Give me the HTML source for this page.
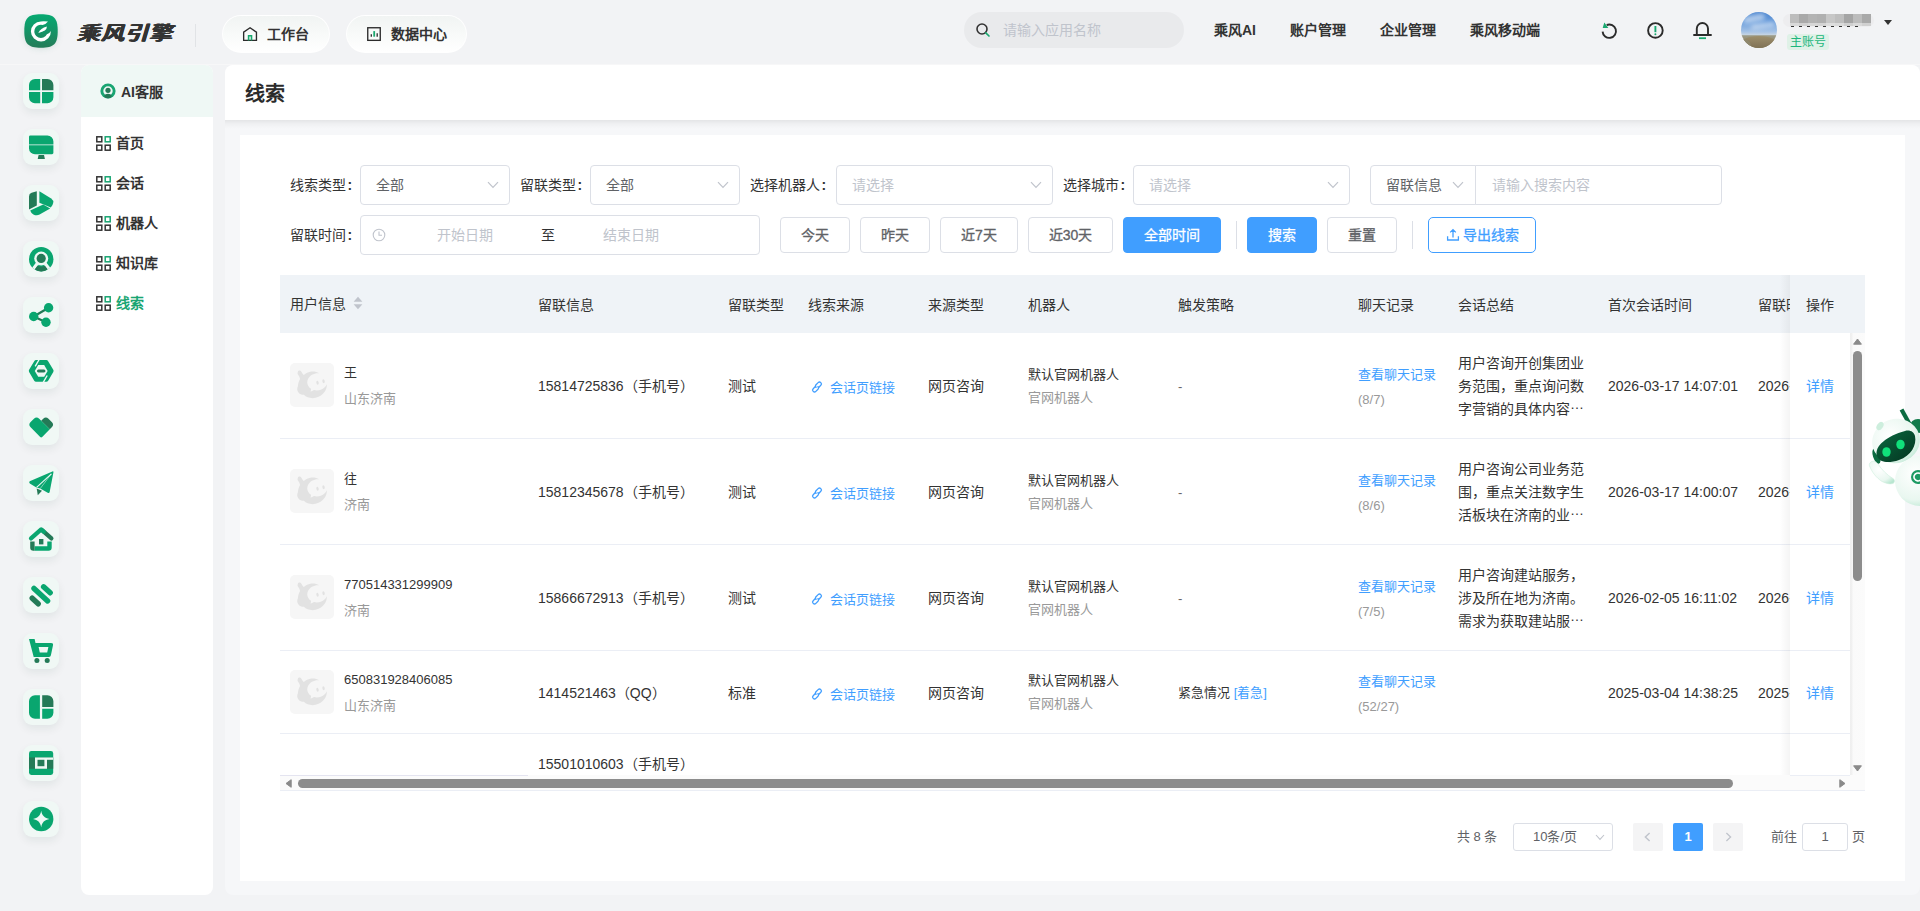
<!DOCTYPE html>
<html lang="zh-CN">
<head>
<meta charset="utf-8">
<title>线索</title>
<style>
*{box-sizing:border-box;margin:0;padding:0}
html,body{width:1920px;height:911px;overflow:hidden}
body{position:relative;background:#f2f3f5;font-family:"Liberation Sans",sans-serif;font-size:14px;color:#333;-webkit-font-smoothing:auto}
.a{position:absolute}
.t{position:absolute;white-space:nowrap;line-height:20px;height:20px}
.b{font-weight:700}
.m{font-weight:500}
svg{display:block;position:absolute;overflow:visible}
/* header */
.pill{position:absolute;top:15px;height:38px;border-radius:19px;background:linear-gradient(180deg,#f1f4f3 0%,#f8faf9 50%,#ffffff 100%);border:1px solid rgba(255,255,255,.95)}
.nav{position:absolute;top:20px;line-height:20px;font-weight:700;font-size:14px;color:#333;white-space:nowrap}
/* side icons */
.ib{position:absolute;left:23px;width:36px;height:36px;border-radius:9px;background:#f0f8f5;box-shadow:0 4px 8px rgba(20,60,45,.07)}
.ib svg{left:6px;top:6px;width:24px;height:24px}
/* submenu */
.mi{position:absolute;left:116px;font-weight:700;font-size:14px;line-height:20px;color:#333;white-space:nowrap}
.gi{left:96px;width:15px;height:15px}
/* form */
.lbl{position:absolute;font-size:14px;line-height:20px;color:#333;white-space:nowrap}
.sel{position:absolute;height:40px;border:1px solid #dcdfe6;border-radius:4px;background:#fff}
.sel .v{position:absolute;left:15px;top:9px;line-height:20px;font-size:14px;color:#606266;white-space:nowrap}
.sel .ph{color:#c0c4cc}
.sel svg.ch{right:10px;top:15px;width:12px;height:8px}
.btn{position:absolute;top:217px;height:36px;border:1px solid #dcdfe6;border-radius:4px;background:#fff;color:#606266;font-size:14px;font-weight:400;-webkit-text-stroke:.3px;line-height:34px;text-align:center;white-space:nowrap}
.btn.p{background:#409eff;border-color:#409eff;color:#fff}
/* table */
.th{position:absolute;top:19px;line-height:20px;font-size:14px;color:#333;white-space:nowrap}
.row{position:absolute;left:0;width:1570px;border-bottom:1px solid #ebeef5}
.c14{font-size:14px;color:#333}
.c13{font-size:13px;color:#333}
.g13{font-size:13px;color:#999}
.l13{font-size:13px;color:#409eff}
.av{position:absolute;left:10px;width:44px;height:44px;border-radius:5px;background:#f6f6f6}
.av svg{left:0;top:0;width:44px;height:44px}
.sum{position:absolute;left:1178px;width:130px;font-size:14px;line-height:23px;color:#333}
/* pagination */
.pg{position:absolute;top:823px;height:28px;border-radius:2px}
</style>
</head>
<body>

<!-- header -->
<div class="a" style="left:0;top:64px;width:1920px;height:1px;background:#f7f7f8"></div>
<div class="a" style="left:27px;top:20px;width:28px;height:26px;border-radius:11px;background:rgba(30,110,80,.55);filter:blur(4px);opacity:.55"></div>
<svg viewBox="0 0 34 34" style="left:24px;top:14px;width:34px;height:34px"><defs><linearGradient id="lg0" x1="0" y1="0" x2="0" y2="1"><stop offset="0" stop-color="#06a971"/><stop offset=".5" stop-color="#149466"/><stop offset="1" stop-color="#257c59"/></linearGradient></defs>
<path d="M17 .3C30 .3 33.700 4 33.700 17C33.700 30 30 33.700 17 33.700C4 33.700 .3 30 .3 17C.3 4 4 .3 17 .3z" fill="url(#lg0)"/>
<path d="M24 7.500Q20 7.200 16.900 7.400A10 10 0 1 0 26.900 17Q25.600 19.400 22.900 20.200A6.600 6.600 0 1 1 18.600 11Q21.800 10.400 24 7.500z" fill="#fff"/>
<path d="M14.300 19Q16.400 14.200 22.900 12.500Q23 17 14.300 19z" fill="#fff"/>
</svg>
<div class="a b" style="left:78.500px;top:17.500px;width:110px;height:30px;line-height:30px;font-size:19.500px;font-weight:400;color:#333;white-space:nowrap;transform-origin:0 50%;transform:scaleX(1.17) skewX(-14deg);letter-spacing:.55px;text-shadow:.4px 0 0 #333,-.4px 0 0 #333,.8px 0 0 #333,-.8px 0 0 #333,1.150px 0 0 #333,-1.150px 0 0 #333">乘风引擎</div>
<div class="a" style="left:195px;top:24px;width:1px;height:23px;background:#e1e3e6"></div>

<div class="pill" style="left:222px;width:108px"></div>
<svg viewBox="242 26 16 16" style="left:242px;top:26px;width:16px;height:16px"><path d="M243.650 40.400V32.200L250.050 27.800L256.450 32.200V40.400z" fill="none" stroke="#2b2b2b" stroke-width="1.350" stroke-linejoin="miter"/><path d="M248.600 40.400V35.700h2.900V40.400" fill="none" stroke="#19a86f" stroke-width="1.600"/></svg>
<div class="nav" style="left:267px;top:24px">工作台</div>

<div class="pill" style="left:346px;width:121px"></div>
<svg viewBox="366 26 16 16" style="left:366px;top:26px;width:16px;height:16px"><rect x="367.750" y="27.750" width="12.500" height="12.600" fill="none" stroke="#2b2b2b" stroke-width="1.350"/><path d="M371.300 34.200V36.700M377.200 33.300V36.700" stroke="#2b2b2b" stroke-width="1.300" fill="none"/><path d="M374.200 31.100V36.700" stroke="#19a86f" stroke-width="1.800" fill="none"/></svg>
<div class="nav" style="left:391px;top:24px">数据中心</div>

<div class="a" style="left:964px;top:12px;width:220px;height:36px;border-radius:18px;background:#e9eaec"></div>
<svg viewBox="0 0 16 16" style="left:975px;top:22px;width:16px;height:16px"><circle cx="7" cy="7" r="5" fill="none" stroke="#333" stroke-width="1.6"/><path d="M10.8 10.8L14 14" stroke="#19a86f" stroke-width="1.7" stroke-linecap="round"/></svg>
<div class="t" style="left:1003px;top:20px;color:#c0c4cc;font-size:14px">请输入应用名称</div>

<div class="nav" style="left:1214px">乘风AI</div>
<div class="nav" style="left:1290px">账户管理</div>
<div class="nav" style="left:1380px">企业管理</div>
<div class="nav" style="left:1470px">乘风移动端</div>

<svg viewBox="1590 10 140 40" style="left:1590px;top:10px;width:140px;height:40px">
<path d="M1606.700 25A6.700 6.700 0 1 1 1602.600 31.600" fill="none" stroke="#2b2b2b" stroke-width="1.900"/>
<path d="M1604.300 22.600L1602.700 28H1608.400z" fill="#19a86f"/>
<circle cx="1655.400" cy="30.400" r="7.300" fill="none" stroke="#2b2b2b" stroke-width="1.900"/>
<path d="M1655.400 26V32.200" stroke="#19a86f" stroke-width="1.900"/><circle cx="1655.400" cy="34.200" r="1" fill="#19a86f"/>
<path d="M1694 35H1711M1696.800 35V28.500a5.600 5.600 0 0 1 11.200 0V35" fill="none" stroke="#2b2b2b" stroke-width="1.900" stroke-linecap="round"/>
<path d="M1699 38.200H1706" stroke="#19a86f" stroke-width="1.800"/>
</svg>

<div class="a" style="left:1741px;top:12px;width:36px;height:36px;border-radius:50%;overflow:hidden;background:linear-gradient(180deg,#4a84cf 0%,#6d9fdc 30%,#a6c3e6 55%,#c4d3e2 63%,#9c9a86 66%,#8a7a58 100%)">
<div class="a" style="left:2px;top:3px;width:22px;height:7px;border-radius:4px;background:rgba(255,255,255,.5);filter:blur(2px);transform:rotate(-12deg)"></div>
<div class="a" style="left:10px;top:11px;width:24px;height:5px;border-radius:3px;background:rgba(255,255,255,.45);filter:blur(2px);transform:rotate(-8deg)"></div>
<div class="a" style="left:-2px;top:24px;width:40px;height:24px;border-radius:50% 50% 0 0 / 40% 40% 0 0;background:linear-gradient(180deg,#9d8f6c 0%,#86775a 40%,#5f5b3c 100%)"></div>
<div class="a" style="left:-6px;top:27px;width:16px;height:14px;border-radius:50%;background:#8f8a70;opacity:.8"></div>
</div>
<div class="a" style="left:1783px;top:14px;width:91px;height:13px;border-radius:7px;background:#ededef"></div>
<div class="a" style="left:1790px;top:14px;width:9px;height:9px;background:#bdbdbd"></div><div class="a" style="left:1799px;top:14px;width:9px;height:9px;background:#a9a9a9"></div><div class="a" style="left:1808px;top:14px;width:9px;height:9px;background:#b3b3b3"></div><div class="a" style="left:1817px;top:14px;width:9px;height:9px;background:#b0b0b0"></div><div class="a" style="left:1826px;top:14px;width:9px;height:9px;background:#c7c7c7"></div><div class="a" style="left:1835px;top:14px;width:9px;height:9px;background:#bebebe"></div><div class="a" style="left:1844px;top:14px;width:9px;height:9px;background:#a5a5a5"></div><div class="a" style="left:1853px;top:14px;width:9px;height:9px;background:#bcbcbc"></div><div class="a" style="left:1862px;top:14px;width:9px;height:9px;background:#a9a9a9"></div>
<div class="a" style="left:1790px;top:23px;width:9px;height:3px;background:#d9d9d9"></div><div class="a" style="left:1799px;top:23px;width:9px;height:3px;background:#d0d0d0"></div><div class="a" style="left:1808px;top:23px;width:9px;height:3px;background:#d6d6d6"></div><div class="a" style="left:1817px;top:23px;width:9px;height:3px;background:#d4d4d4"></div><div class="a" style="left:1826px;top:23px;width:9px;height:3px;background:#dedede"></div><div class="a" style="left:1835px;top:23px;width:9px;height:3px;background:#dadada"></div><div class="a" style="left:1844px;top:23px;width:9px;height:3px;background:#cfcfcf"></div><div class="a" style="left:1853px;top:23px;width:9px;height:3px;background:#d9d9d9"></div><div class="a" style="left:1862px;top:23px;width:9px;height:3px;background:#d0d0d0"></div>
<div class="a" style="left:1791px;top:26px;width:72px;height:1px;background:repeating-linear-gradient(90deg,#333 0,#333 3px,transparent 3px,transparent 8px)"></div>
<div class="a" style="left:1787px;top:34px;width:42px;height:16px;border-radius:3px;background:#dff1e7"></div>
<div class="t" style="left:1790px;top:32px;font-size:12px;color:#1db67b">主账号</div>
<svg viewBox="0 0 8 5" style="left:1884px;top:20px;width:8px;height:5px"><path d="M0 0h8L4 5z" fill="#333"/></svg>

<!-- left icon bar -->
<div class="ib" style="top:73px"><svg viewBox="0 0 24 24"><path d="M0 6a6 6 0 0 1 6-6h5.200v11.200H0z" fill="#09a66f"/><path d="M13 0h5.400a6 6 0 0 1 6 6v5.200H13z" fill="#247a57"/><path d="M0 13h11.200v11.200H6a6 6 0 0 1-6-6z" fill="#09a66f"/><path d="M13 13h11.400v5.200a6 6 0 0 1-6 6H13z" fill="#09a66f"/></svg></div>
<div class="ib" style="top:129px"><svg viewBox="0 0 24 24"><g transform="translate(0 -.6)"><path d="M0 2.400A1.400 1.400 0 0 1 1.400 1H18.400a6 6 0 0 1 6 6v3.100H0z" fill="#09a66f"/><path d="M0 10.800h24.400v7.600a1.400 1.400 0 0 1-1.400 1.400H6a6 6 0 0 1-6-6z" fill="#09a66f"/><path d="M9.600 20.600h5.400l.9 4.100H8.700z" fill="#247a57"/></g></svg></div>
<div class="ib" style="top:185px"><svg viewBox="0 0 24 24"><path d="M0 5.400Q0 2.600 2.600 1.800L7.800.2V14.400L0 18.600z" fill="#247a57"/><path d="M10.400.3L22.200 7.400Q24.800 9.200 24.200 12Q23.600 14.800 21.800 16.400L10.400 11.800z" fill="#09a66f"/><path d="M1.200 19.600L14.200 13.600 21.200 17.400 10.600 23.600Q7.600 25 4.400 23.400Q2 22.200 1.200 19.600z" fill="#09a66f"/></svg></div>
<div class="ib" style="top:241px"><svg viewBox="0 0 24 24"><circle cx="12.200" cy="12.200" r="12.200" fill="#09a66f"/><circle cx="12.200" cy="11.600" r="7" fill="#eef8f4"/><path d="M8.400 16.600L4.600 21.600M16 16.600l3.800 5" stroke="#eef8f4" stroke-width="3.400"/><circle cx="12.200" cy="11.400" r="4.600" fill="#247a57"/><path d="M5.800 22.200L8.600 18.600Q12.200 21 15.800 18.600L18.600 22.200Q15.600 24.400 12.200 24.400T5.800 22.200z" fill="#247a57"/></svg></div>
<div class="ib" style="top:297px"><svg viewBox="0 0 24 24"><path d="M4.700 13.500L19.600 4.700M4.700 13.500L17 19.300" stroke="#247a57" stroke-width="2.200" fill="none"/><circle cx="4.700" cy="13.500" r="4.700" fill="#09a66f"/><circle cx="19.600" cy="4.700" r="4.700" fill="#09a66f"/><circle cx="17" cy="19.300" r="4.700" fill="#09a66f"/></svg></div>
<div class="ib" style="top:353px"><svg viewBox="0 0 24 24"><g transform="translate(12.200 11.900) scale(1.070) translate(-12.200 -11.900)"><path d="M7.400 1.800h9.600a2 2 0 0 1 1.700 1l4.800 8.100a2 2 0 0 1 0 2l-4.800 8.100a2 2 0 0 1-1.700 1H7.400a2 2 0 0 1-1.700-1L.9 12.900a2 2 0 0 1 0-2l4.800-8.100a2 2 0 0 1 1.700-1z" fill="#09a66f"/><path d="M9.400 6.400h5.600l3.200 5.500-3.200 5.500H9.400L6.200 11.900z" fill="#eef8f4"/><path d="M10.400 1L6.600 7.600M14 22.800l3.800-6.600" stroke="#eef8f4" stroke-width="1.300"/><rect x="8.200" y="10.500" width="8" height="3" rx="1.400" fill="#247a57"/></g></svg></div>
<div class="ib" style="top:409px"><svg viewBox="0 0 24 24"><g transform="translate(12.200 12) scale(1.100) translate(-12.200 -12.100)"><path d="M12.200 6.440L14.020 4.620Q16.420 2.220 18.820 4.620L21.800 7.600Q24.200 10 21.800 12.400L19.980 14.220z" fill="#247a57"/><path d="M2.600 12.400Q.2 10 2.600 7.600L5.580 4.620Q7.980 2.220 10.380 4.620L19.980 14.220 13.100 21.100Q12.200 22 11.300 21.100z" fill="#09a66f"/></g></svg></div>
<div class="ib" style="top:465px"><svg viewBox="0 0 24 24"><path d="M7.700 17.400L8.800 24.200 13 19.800z" fill="#247a57"/><path d="M.7 10.200L23.400 .5Q24.700 0 24.400 1.400L20.700 20.800Q20.300 22.600 18.700 21.700L11.200 17.600 7.400 16.400 .8 12.500Q-.4 11.300 .7 10.200z" fill="#09a66f"/><path d="M7.600 16.400L22.400 2.800" stroke="#eef8f4" stroke-width="1.100" fill="none"/><path d="M11.200 17.600L22.400 2.800" stroke="#eef8f4" stroke-width=".5" fill="none"/></svg></div>
<div class="ib" style="top:521px"><svg viewBox="0 0 24 24"><path d="M5.600 14.600V19.200h12.700v-4.600h4.400V20.400a3.300 3.300 0 0 1-3.300 3.300H5.600z" fill="#09a66f"/><path d="M1.200 14.600h4.400v9.100H4.500A3.300 3.300 0 0 1 1.200 20.400z" fill="#247a57"/><rect x="10" y="12" width="4.400" height="5.400" fill="#247a57"/><path d="M13.600 3.600L22.400 11.400" stroke="#247a57" stroke-width="4.200" stroke-linecap="round" fill="none"/><path d="M2 11.400L12.200 2.400 14.800 4.700" stroke="#09a66f" stroke-width="4.200" stroke-linecap="round" stroke-linejoin="round" fill="none"/></svg></div>
<div class="ib" style="top:577px"><svg viewBox="0 0 24 24"><path d="M14.600 3.800l6.600 6M5 5.400L18.600 18" stroke="#09a66f" stroke-width="5.400" stroke-linecap="round"/><path d="M3.200 15.200l6 5.600" stroke="#247a57" stroke-width="5.400" stroke-linecap="round"/></svg></div>
<div class="ib" style="top:633px"><svg viewBox="0 0 24 24"><path d="M0 0h5.600l.9 3.900H22a2 2 0 0 1 2 2.400l-2.100 10a2 2 0 0 1-2 1.600H4.700zM9.600 8l1.200 5.400h7.400L19.400 8z" fill="#09a66f" fill-rule="evenodd"/><circle cx="7.900" cy="21.400" r="2.500" fill="#247a57"/><circle cx="18.200" cy="21.400" r="2.500" fill="#247a57"/></svg></div>
<div class="ib" style="top:689px"><svg viewBox="0 0 24 24"><path d="M6 .2h4.900v23.600H6a6 6 0 0 1-6-6V6.200a6 6 0 0 1 6-6z" fill="#09a66f"/><path d="M13.200.2H18.400a6 6 0 0 1 6 6V12H13.200z" fill="#247a57"/><path d="M13.200 13.700H24.400v4.100a6 6 0 0 1-6 6H13.200z" fill="#09a66f"/></svg></div>
<div class="ib" style="top:745px"><svg viewBox="0 0 24 24"><rect x="0" y="0" width="24.200" height="24" rx="2.400" fill="#09a66f"/><rect x="0" y="6.450" width="24.200" height="11.300" fill="#247a57"/><rect x="6" y="6.450" width="12" height="11.300" fill="#eef8f4"/><rect x="18" y="6.450" width="6.200" height="2.350" fill="#eef8f4"/><rect x="8.500" y="8.800" width="6.900" height="6.400" fill="#247a57"/></svg></div>
<div class="ib" style="top:801px"><svg viewBox="0 0 24 24"><circle cx="12.200" cy="12" r="12.200" fill="#09a66f"/><path d="M12.200 3.800C13 8.600 15.600 11.200 20.400 12 15.600 12.800 13 15.400 12.200 20.200 11.400 15.400 8.800 12.800 4 12 8.800 11.200 11.400 8.600 12.200 3.800z" fill="#eef8f4"/></svg></div>

<!-- submenu -->
<div class="a" style="left:81px;top:65px;width:132px;height:830px;border-radius:8px;background:#fff"></div>
<div class="a" style="left:81px;top:65px;width:132px;height:52px;border-radius:8px 8px 0 0;background:#eff8f5"></div>
<svg viewBox="0 0 16 16" style="left:100.200px;top:83.200px;width:16px;height:16px"><circle cx="8" cy="8" r="7.600" fill="#19a572"/><circle cx="8" cy="8" r="4.700" fill="#eff8f5"/><circle cx="8" cy="7.300" r="2.600" fill="#247a57"/><path d="M4 13.200C4.800 11.400 6.200 10.700 8 10.700s3.200.7 4 2.500c-1.100 1.400-2.500 2.100-4 2.100s-2.900-.7-4-2.100z" fill="#247a57"/></svg>
<div class="mi" style="left:121px;top:82px">AI客服</div>
<svg class="gi" viewBox="0 0 15 15" style="top:136px"><rect x=".8" y=".8" width="5" height="5" fill="none" stroke="#333" stroke-width="1.500"/><rect x="9.200" y=".8" width="5" height="5" fill="none" stroke="#19a572" stroke-width="1.500"/><rect x=".8" y="9.200" width="5" height="5" fill="none" stroke="#333" stroke-width="1.500"/><rect x="9.200" y="9.200" width="5" height="5" fill="none" stroke="#333" stroke-width="1.500"/></svg><div class="mi" style="top:133px;color:#333">首页</div>
<svg class="gi" viewBox="0 0 15 15" style="top:176px"><rect x=".8" y=".8" width="5" height="5" fill="none" stroke="#333" stroke-width="1.500"/><rect x="9.200" y=".8" width="5" height="5" fill="none" stroke="#19a572" stroke-width="1.500"/><rect x=".8" y="9.200" width="5" height="5" fill="none" stroke="#333" stroke-width="1.500"/><rect x="9.200" y="9.200" width="5" height="5" fill="none" stroke="#333" stroke-width="1.500"/></svg><div class="mi" style="top:173px;color:#333">会话</div>
<svg class="gi" viewBox="0 0 15 15" style="top:216px"><rect x=".8" y=".8" width="5" height="5" fill="none" stroke="#333" stroke-width="1.500"/><rect x="9.200" y=".8" width="5" height="5" fill="none" stroke="#19a572" stroke-width="1.500"/><rect x=".8" y="9.200" width="5" height="5" fill="none" stroke="#333" stroke-width="1.500"/><rect x="9.200" y="9.200" width="5" height="5" fill="none" stroke="#333" stroke-width="1.500"/></svg><div class="mi" style="top:213px;color:#333">机器人</div>
<svg class="gi" viewBox="0 0 15 15" style="top:256px"><rect x=".8" y=".8" width="5" height="5" fill="none" stroke="#333" stroke-width="1.500"/><rect x="9.200" y=".8" width="5" height="5" fill="none" stroke="#19a572" stroke-width="1.500"/><rect x=".8" y="9.200" width="5" height="5" fill="none" stroke="#333" stroke-width="1.500"/><rect x="9.200" y="9.200" width="5" height="5" fill="none" stroke="#333" stroke-width="1.500"/></svg><div class="mi" style="top:253px;color:#333">知识库</div>
<svg class="gi" viewBox="0 0 15 15" style="top:296px"><rect x=".8" y=".8" width="5" height="5" fill="none" stroke="#333" stroke-width="1.500"/><rect x="9.200" y=".8" width="5" height="5" fill="none" stroke="#19a572" stroke-width="1.500"/><rect x=".8" y="9.200" width="5" height="5" fill="none" stroke="#333" stroke-width="1.500"/><rect x="9.200" y="9.200" width="5" height="5" fill="none" stroke="#333" stroke-width="1.500"/></svg><div class="mi" style="top:293px;color:#19a572">线索</div>

<!-- main -->
<div class="a" style="left:225px;top:65px;width:1695px;height:830px;border-radius:8px;background:#f6f7f9;overflow:hidden">
<div class="a" style="left:0;top:55px;width:1695px;height:9px;background:linear-gradient(180deg,rgba(0,0,0,.075) 0%,rgba(0,0,0,.032) 40%,rgba(0,0,0,.008) 80%,rgba(0,0,0,0) 100%)"></div>
<div class="a" style="left:0;top:0;width:1695px;height:55px;background:#fff"></div>
</div>
<div class="a b" style="left:245px;top:80px;font-size:20px;line-height:28px;color:#2b2b2b;white-space:nowrap">线索</div>
<div class="a" style="left:240px;top:135px;width:1665px;height:746px;background:#fff"></div>

<!-- filters row 1 -->
<div class="lbl" style="left:290px;top:175px">线索类型<span style="font-weight:700;margin-left:1.500px">:</span></div>
<div class="sel" style="left:360px;top:165px;width:150px"><span class="v">全部</span><svg class="ch" viewBox="0 0 12 8"><path d="M1 1.200L6 6.400 11 1.200" fill="none" stroke="#c0c4cc" stroke-width="1.200"/></svg></div>
<div class="lbl" style="left:520px;top:175px">留联类型<span style="font-weight:700;margin-left:1.500px">:</span></div>
<div class="sel" style="left:590px;top:165px;width:150px"><span class="v">全部</span><svg class="ch" viewBox="0 0 12 8"><path d="M1 1.200L6 6.400 11 1.200" fill="none" stroke="#c0c4cc" stroke-width="1.200"/></svg></div>
<div class="lbl" style="left:750px;top:175px">选择机器人<span style="font-weight:700;margin-left:1.500px">:</span></div>
<div class="sel" style="left:836px;top:165px;width:217px"><span class="v ph">请选择</span><svg class="ch" viewBox="0 0 12 8"><path d="M1 1.200L6 6.400 11 1.200" fill="none" stroke="#c0c4cc" stroke-width="1.200"/></svg></div>
<div class="lbl" style="left:1063px;top:175px">选择城市<span style="font-weight:700;margin-left:1.500px">:</span></div>
<div class="sel" style="left:1133px;top:165px;width:217px"><span class="v ph">请选择</span><svg class="ch" viewBox="0 0 12 8"><path d="M1 1.200L6 6.400 11 1.200" fill="none" stroke="#c0c4cc" stroke-width="1.200"/></svg></div>
<div class="sel" style="left:1370px;top:165px;width:106px;border-radius:4px 0 0 4px"><span class="v" style="left:15px">留联信息</span><svg class="ch" viewBox="0 0 12 8" style="right:11px"><path d="M1 1.200L6 6.400 11 1.200" fill="none" stroke="#c0c4cc" stroke-width="1.200"/></svg></div>
<div class="sel" style="left:1475px;top:165px;width:247px;border-radius:0 4px 4px 0"><span class="v ph" style="left:16px">请输入搜索内容</span></div>

<!-- filters row 2 -->
<div class="lbl" style="left:290px;top:225px">留联时间<span style="font-weight:700;margin-left:1.500px">:</span></div>
<div class="sel" style="left:360px;top:215px;width:400px"></div>
<svg viewBox="0 0 14 14" style="left:372px;top:228px;width:14px;height:14px"><circle cx="7" cy="7" r="5.800" fill="none" stroke="#c0c4cc" stroke-width="1.100"/><path d="M7 3.600V7.200H10" fill="none" stroke="#c0c4cc" stroke-width="1.100"/></svg>
<div class="t" style="left:437px;top:225px;color:#c0c4cc">开始日期</div>
<div class="t" style="left:541px;top:225px;color:#303133">至</div>
<div class="t" style="left:603px;top:225px;color:#c0c4cc">结束日期</div>

<div class="btn" style="left:780px;width:70px">今天</div>
<div class="btn" style="left:860px;width:70px">昨天</div>
<div class="btn" style="left:940px;width:78px">近7天</div>
<div class="btn" style="left:1028px;width:85px">近30天</div>
<div class="btn p" style="left:1123px;width:98px">全部时间</div>
<div class="a" style="left:1236px;top:221px;width:1px;height:28px;background:#dcdfe6"></div>
<div class="btn p" style="left:1247px;width:70px">搜索</div>
<div class="btn" style="left:1327px;width:70px">重置</div>
<div class="a" style="left:1412px;top:221px;width:1px;height:28px;background:#dcdfe6"></div>
<div class="btn" style="left:1428px;width:108px;border-color:#409eff;color:#409eff;border-radius:5px;text-align:left;padding-left:34px">导出线索</div>
<svg viewBox="0 0 14 14" style="left:1446px;top:228px;width:14px;height:14px"><path d="M7 9.400V1.800M4.200 4.400L7 1.600l2.800 2.800M1.600 8.200v3.800h10.800V8.200" fill="none" stroke="#409eff" stroke-width="1.300"/></svg>

<!-- table -->
<div class="a" style="left:280px;top:275px;width:1585px;height:58px;background:#eff3f7"></div>
<div class="t c14" style="left:290px;top:293.5px">用户信息</div><div class="t c14" style="left:538px;top:294.5px">留联信息</div><div class="t c14" style="left:728px;top:294.5px">留联类型</div><div class="t c14" style="left:808px;top:294.5px">线索来源</div><div class="t c14" style="left:928px;top:294.5px">来源类型</div><div class="t c14" style="left:1028px;top:294.5px">机器人</div><div class="t c14" style="left:1178px;top:294.5px">触发策略</div><div class="t c14" style="left:1358px;top:294.5px">聊天记录</div><div class="t c14" style="left:1458px;top:294.5px">会话总结</div><div class="t c14" style="left:1608px;top:294.5px">首次会话时间</div><div class="t c14" style="left:1758px;top:294.5px">留联时间</div>
<svg viewBox="0 0 10 14" style="left:353px;top:296px;width:10px;height:14px"><path d="M5 .8L9.400 5.800H.6z" fill="#c0c4cc"/><path d="M5 13.200L9.400 8.200H.6z" fill="#c0c4cc"/></svg>
<div class="a" style="left:280px;top:438px;width:1570px;height:1px;background:#ebeef5"></div>
<div class="av" style="left:290px;top:363.0px"><svg viewBox="0 0 44 44"><g transform="translate(22 22.800) scale(1.060) translate(-22 -22)"><path d="M8.600 9.200a1.700 1.700 0 0 1 3.200-.8c.9 1.200 1.300 2.600 2.500 3.400 1.700-1.700 4.300-2.900 7.300-3.200 2.700-.2 5.200.4 7 1.600-2.200-.3-4.600.2-6.600 1.400-3.400 2-5.100 5.600-4.200 8.900.5 1.800 1.700 3.300 3.300 4.300l-.4 2.900 3.200-1.700c2 .6 4.300.5 6.500-.3 2.600-1 4.600-2.900 5.600-5.200.3 4.700-2.600 9.600-7.800 11.900-5 2.200-10.600 1.400-13.900-1.900-1.700.2-3.600-.5-4.900-1.900-1.500-1.700-1.700-4-.8-5.900.3-2.800.9-5 2.100-7.100-.3-1.900-1.300-3.100-2.100-4.400-.3-.6-.3-1.300 0-2z" fill="#e2e2e2"/><ellipse cx="27.200" cy="19.200" rx="1.100" ry="1.900" transform="rotate(-12 27.200 19.200)" fill="#e2e2e2"/><ellipse cx="32.900" cy="17.600" rx="1.100" ry="1.900" transform="rotate(-12 32.900 17.600)" fill="#e2e2e2"/></g></svg></div>
<div class="t c13" style="left:344px;top:363.0px">王</div>
<div class="t g13" style="left:344px;top:389.2px">山东济南</div>
<div class="t c14" style="left:538px;top:376.0px">15814725836（手机号）</div>
<div class="t c14" style="left:728px;top:376.0px">测试</div>
<svg viewBox="-7 -7 14 14" style="left:810.1px;top:380.2px;width:14px;height:14px"><g fill="none" stroke="#409eff" stroke-width="1.300" stroke-linecap="round" transform="rotate(-45)"><path d="M-.5 -1.500H-3.900a1.900 1.900 0 0 0 0 3.800h3a1.900 1.900 0 0 0 1.900-1.900"/><path d="M.5 1.500H3.900a1.900 1.900 0 0 0 0-3.800h-3a1.900 1.900 0 0 0-1.900 1.900"/></g></svg>
<div class="t l13" style="left:830px;top:378.0px">会话页链接</div>
<div class="t c14" style="left:928px;top:376.0px">网页咨询</div>
<div class="t c13" style="left:1028px;top:364.5px">默认官网机器人</div>
<div class="t g13" style="left:1028px;top:387.5px">官网机器人</div>
<div class="t" style="left:1178px;top:376.5px;font-size:13px;color:#666">-</div>
<div class="t l13" style="left:1358px;top:365.0px">查看聊天记录</div>
<div class="t g13" style="left:1358px;top:390.0px">(8/7)</div>
<div class="sum" style="left:1458px;top:351.8px">用户咨询开创集团业<br>务范围，重点询问数<br>字营销的具体内容<span style="position:relative;top:-4.500px">…</span></div>
<div class="t c14" style="left:1608px;top:376.0px">2026-03-17 14:07:01</div>
<div class="t c14" style="left:1758px;top:376.0px">2026-03-17</div>
<div class="a" style="left:280px;top:544px;width:1570px;height:1px;background:#ebeef5"></div>
<div class="av" style="left:290px;top:469.0px"><svg viewBox="0 0 44 44"><g transform="translate(22 22.800) scale(1.060) translate(-22 -22)"><path d="M8.600 9.200a1.700 1.700 0 0 1 3.200-.8c.9 1.200 1.300 2.600 2.500 3.400 1.700-1.700 4.300-2.900 7.300-3.200 2.700-.2 5.200.4 7 1.600-2.200-.3-4.600.2-6.600 1.400-3.400 2-5.100 5.600-4.200 8.900.5 1.800 1.700 3.300 3.300 4.300l-.4 2.900 3.200-1.700c2 .6 4.300.5 6.500-.3 2.600-1 4.600-2.900 5.600-5.200.3 4.700-2.600 9.600-7.800 11.900-5 2.200-10.600 1.400-13.900-1.900-1.700.2-3.600-.5-4.900-1.900-1.500-1.700-1.700-4-.8-5.900.3-2.800.9-5 2.100-7.100-.3-1.900-1.300-3.100-2.100-4.400-.3-.6-.3-1.300 0-2z" fill="#e2e2e2"/><ellipse cx="27.200" cy="19.200" rx="1.100" ry="1.900" transform="rotate(-12 27.200 19.200)" fill="#e2e2e2"/><ellipse cx="32.900" cy="17.600" rx="1.100" ry="1.900" transform="rotate(-12 32.900 17.600)" fill="#e2e2e2"/></g></svg></div>
<div class="t c13" style="left:344px;top:469.0px">往</div>
<div class="t g13" style="left:344px;top:495.2px">济南</div>
<div class="t c14" style="left:538px;top:482.0px">15812345678（手机号）</div>
<div class="t c14" style="left:728px;top:482.0px">测试</div>
<svg viewBox="-7 -7 14 14" style="left:810.1px;top:486.2px;width:14px;height:14px"><g fill="none" stroke="#409eff" stroke-width="1.300" stroke-linecap="round" transform="rotate(-45)"><path d="M-.5 -1.500H-3.900a1.900 1.900 0 0 0 0 3.800h3a1.900 1.900 0 0 0 1.900-1.900"/><path d="M.5 1.500H3.900a1.900 1.900 0 0 0 0-3.800h-3a1.900 1.900 0 0 0-1.900 1.900"/></g></svg>
<div class="t l13" style="left:830px;top:484.0px">会话页链接</div>
<div class="t c14" style="left:928px;top:482.0px">网页咨询</div>
<div class="t c13" style="left:1028px;top:470.5px">默认官网机器人</div>
<div class="t g13" style="left:1028px;top:493.5px">官网机器人</div>
<div class="t" style="left:1178px;top:482.5px;font-size:13px;color:#666">-</div>
<div class="t l13" style="left:1358px;top:471.0px">查看聊天记录</div>
<div class="t g13" style="left:1358px;top:496.0px">(8/6)</div>
<div class="sum" style="left:1458px;top:457.8px">用户咨询公司业务范<br>围，重点关注数字生<br>活板块在济南的业<span style="position:relative;top:-4.500px">…</span></div>
<div class="t c14" style="left:1608px;top:482.0px">2026-03-17 14:00:07</div>
<div class="t c14" style="left:1758px;top:482.0px">2026-03-17</div>
<div class="a" style="left:280px;top:650px;width:1570px;height:1px;background:#ebeef5"></div>
<div class="av" style="left:290px;top:575.0px"><svg viewBox="0 0 44 44"><g transform="translate(22 22.800) scale(1.060) translate(-22 -22)"><path d="M8.600 9.200a1.700 1.700 0 0 1 3.200-.8c.9 1.200 1.300 2.600 2.500 3.400 1.700-1.700 4.300-2.900 7.300-3.200 2.700-.2 5.200.4 7 1.600-2.200-.3-4.600.2-6.600 1.400-3.400 2-5.100 5.600-4.200 8.900.5 1.800 1.700 3.300 3.300 4.300l-.4 2.900 3.200-1.700c2 .6 4.300.5 6.500-.3 2.600-1 4.600-2.900 5.600-5.200.3 4.700-2.600 9.600-7.800 11.900-5 2.200-10.600 1.400-13.900-1.900-1.700.2-3.600-.5-4.900-1.900-1.500-1.700-1.700-4-.8-5.900.3-2.800.9-5 2.100-7.100-.3-1.900-1.300-3.100-2.100-4.400-.3-.6-.3-1.300 0-2z" fill="#e2e2e2"/><ellipse cx="27.200" cy="19.200" rx="1.100" ry="1.900" transform="rotate(-12 27.200 19.200)" fill="#e2e2e2"/><ellipse cx="32.900" cy="17.600" rx="1.100" ry="1.900" transform="rotate(-12 32.900 17.600)" fill="#e2e2e2"/></g></svg></div>
<div class="t c13" style="left:344px;top:575.0px">770514331299909</div>
<div class="t g13" style="left:344px;top:601.2px">济南</div>
<div class="t c14" style="left:538px;top:588.0px">15866672913（手机号）</div>
<div class="t c14" style="left:728px;top:588.0px">测试</div>
<svg viewBox="-7 -7 14 14" style="left:810.1px;top:592.2px;width:14px;height:14px"><g fill="none" stroke="#409eff" stroke-width="1.300" stroke-linecap="round" transform="rotate(-45)"><path d="M-.5 -1.500H-3.900a1.900 1.900 0 0 0 0 3.800h3a1.900 1.900 0 0 0 1.900-1.900"/><path d="M.5 1.500H3.900a1.900 1.900 0 0 0 0-3.800h-3a1.900 1.900 0 0 0-1.900 1.900"/></g></svg>
<div class="t l13" style="left:830px;top:590.0px">会话页链接</div>
<div class="t c14" style="left:928px;top:588.0px">网页咨询</div>
<div class="t c13" style="left:1028px;top:576.5px">默认官网机器人</div>
<div class="t g13" style="left:1028px;top:599.5px">官网机器人</div>
<div class="t" style="left:1178px;top:588.5px;font-size:13px;color:#666">-</div>
<div class="t l13" style="left:1358px;top:577.0px">查看聊天记录</div>
<div class="t g13" style="left:1358px;top:602.0px">(7/5)</div>
<div class="sum" style="left:1458px;top:563.8px">用户咨询建站服务，<br>涉及所在地为济南。<br>需求为获取建站服<span style="position:relative;top:-4.500px">…</span></div>
<div class="t c14" style="left:1608px;top:588.0px">2026-02-05 16:11:02</div>
<div class="t c14" style="left:1758px;top:588.0px">2026-02-05</div>
<div class="a" style="left:280px;top:733px;width:1570px;height:1px;background:#ebeef5"></div>
<div class="av" style="left:290px;top:669.5px"><svg viewBox="0 0 44 44"><g transform="translate(22 22.800) scale(1.060) translate(-22 -22)"><path d="M8.600 9.200a1.700 1.700 0 0 1 3.200-.8c.9 1.200 1.300 2.600 2.500 3.400 1.700-1.700 4.300-2.900 7.300-3.200 2.700-.2 5.200.4 7 1.600-2.200-.3-4.600.2-6.600 1.400-3.400 2-5.100 5.600-4.200 8.900.5 1.800 1.700 3.300 3.300 4.300l-.4 2.900 3.200-1.700c2 .6 4.300.5 6.500-.3 2.600-1 4.600-2.900 5.600-5.200.3 4.700-2.600 9.600-7.800 11.900-5 2.200-10.600 1.400-13.900-1.900-1.700.2-3.600-.5-4.900-1.900-1.500-1.700-1.700-4-.8-5.900.3-2.800.9-5 2.100-7.100-.3-1.900-1.300-3.100-2.100-4.400-.3-.6-.3-1.300 0-2z" fill="#e2e2e2"/><ellipse cx="27.200" cy="19.200" rx="1.100" ry="1.900" transform="rotate(-12 27.200 19.200)" fill="#e2e2e2"/><ellipse cx="32.900" cy="17.600" rx="1.100" ry="1.900" transform="rotate(-12 32.900 17.600)" fill="#e2e2e2"/></g></svg></div>
<div class="t c13" style="left:344px;top:669.5px">650831928406085</div>
<div class="t g13" style="left:344px;top:695.7px">山东济南</div>
<div class="t c14" style="left:538px;top:682.5px">1414521463（QQ）</div>
<div class="t c14" style="left:728px;top:682.5px">标准</div>
<svg viewBox="-7 -7 14 14" style="left:810.1px;top:686.7px;width:14px;height:14px"><g fill="none" stroke="#409eff" stroke-width="1.300" stroke-linecap="round" transform="rotate(-45)"><path d="M-.5 -1.500H-3.900a1.900 1.900 0 0 0 0 3.800h3a1.900 1.900 0 0 0 1.900-1.900"/><path d="M.5 1.500H3.900a1.900 1.900 0 0 0 0-3.800h-3a1.900 1.900 0 0 0-1.900 1.900"/></g></svg>
<div class="t l13" style="left:830px;top:684.5px">会话页链接</div>
<div class="t c14" style="left:928px;top:682.5px">网页咨询</div>
<div class="t c13" style="left:1028px;top:671.0px">默认官网机器人</div>
<div class="t g13" style="left:1028px;top:694.0px">官网机器人</div>
<div class="t" style="left:1178px;top:683.0px;font-size:13px;color:#333">紧急情况 <span style="color:#409eff">[着急]</span></div>
<div class="t l13" style="left:1358px;top:671.5px">查看聊天记录</div>
<div class="t g13" style="left:1358px;top:696.5px">(52/27)</div>
<div class="t c14" style="left:1608px;top:682.5px">2025-03-04 14:38:25</div>
<div class="t c14" style="left:1758px;top:682.5px">2025-03-04</div>
<div class="t c14" style="left:538px;top:753.5px">15501010603（手机号）</div>

<!-- fixed right column -->
<div class="a" style="left:1780px;top:275px;width:10px;height:500px;background:linear-gradient(90deg,rgba(0,0,0,0),rgba(0,0,0,.045))"></div>
<div class="a" style="left:1790px;top:275px;width:75px;height:58px;background:#eff3f7"></div>
<div class="a" style="left:1790px;top:333px;width:60px;height:442px;background:#fff"></div>
<div class="t c14" style="left:1806px;top:294.500px">操作</div>
<div class="t" style="left:1806px;top:376.0px;font-size:14px;color:#409eff">详情</div><div class="a" style="left:1790px;top:438px;width:60px;height:1px;background:#ebeef5"></div>
<div class="t" style="left:1806px;top:482.0px;font-size:14px;color:#409eff">详情</div><div class="a" style="left:1790px;top:544px;width:60px;height:1px;background:#ebeef5"></div>
<div class="t" style="left:1806px;top:588.0px;font-size:14px;color:#409eff">详情</div><div class="a" style="left:1790px;top:650px;width:60px;height:1px;background:#ebeef5"></div>
<div class="t" style="left:1806px;top:682.5px;font-size:14px;color:#409eff">详情</div><div class="a" style="left:1790px;top:733px;width:60px;height:1px;background:#ebeef5"></div>

<!-- vertical scrollbar -->
<div class="a" style="left:1850px;top:333px;width:15px;height:442px;background:linear-gradient(90deg,#efefef 0,#f1f1f1 2px,#fafafa 3px,#fbfbfb 100%)"></div>
<svg viewBox="0 0 9 7" style="left:1853px;top:338px;width:9px;height:7px"><path d="M4.500 1L8.400 6.200H.6z" fill="#8a8a8a" stroke="#8a8a8a" stroke-width="1" stroke-linejoin="round"/></svg>
<div class="a" style="left:1853px;top:351px;width:9px;height:230px;border-radius:4.500px;background:#8c8c8c"></div>
<svg viewBox="0 0 9 7" style="left:1853px;top:765px;width:9px;height:7px"><path d="M.6 .8h7.800L4.500 6z" fill="#8a8a8a" stroke="#8a8a8a" stroke-width="1" stroke-linejoin="round"/></svg>
<!-- first col bottom line + horizontal scrollbar -->
<div class="a" style="left:280px;top:775px;width:1585px;height:15px;background:#fbfbfb"></div>
<div class="a" style="left:1790px;top:775px;width:60px;height:1px;background:#ebeef5"></div>
<div class="a" style="left:280px;top:775px;width:248px;height:1px;background:#e4e4f0"></div>
<div class="a" style="left:280px;top:790px;width:1585px;height:1px;background:#ebeef5"></div>
<svg viewBox="0 0 7 9" style="left:285px;top:779px;width:7px;height:9px"><path d="M1 4.500L6.200 .7v7.600z" fill="#8a8a8a" stroke="#8a8a8a" stroke-width="1" stroke-linejoin="round"/></svg>
<div class="a" style="left:298px;top:779px;width:1435px;height:9px;border-radius:4.500px;background:#8c8c8c"></div>
<svg viewBox="0 0 7 9" style="left:1839px;top:779px;width:7px;height:9px"><path d="M6 4.500L.8 .7v7.600z" fill="#8a8a8a" stroke="#8a8a8a" stroke-width="1" stroke-linejoin="round"/></svg>

<!-- pagination -->
<div class="t" style="left:1457px;top:827px;font-size:13px;color:#606266">共 8 条</div>
<div class="pg" style="left:1513px;width:100px;border:1px solid #dcdfe6;border-radius:3px;background:#fff"></div>
<div class="t" style="left:1533px;top:827px;font-size:13px;color:#606266">10条/页</div>
<svg viewBox="0 0 10 7" style="left:1595px;top:834px;width:10px;height:7px"><path d="M1 1l4 4.400L9 1" fill="none" stroke="#c0c4cc" stroke-width="1.100"/></svg>
<div class="pg" style="left:1633px;width:30px;background:#f4f4f5"></div>
<svg viewBox="0 0 7 10" style="left:1644px;top:832px;width:7px;height:10px"><path d="M5.600 1L1.400 5l4.200 4" fill="none" stroke="#c0c4cc" stroke-width="1.500"/></svg>
<div class="pg" style="left:1673px;width:30px;background:#409eff"></div>
<div class="t b" style="left:1673px;top:827px;width:30px;text-align:center;font-size:13px;color:#fff">1</div>
<div class="pg" style="left:1713px;width:30px;background:#f4f4f5"></div>
<svg viewBox="0 0 7 10" style="left:1725px;top:832px;width:7px;height:10px"><path d="M1.400 1l4.200 4-4.200 4" fill="none" stroke="#c0c4cc" stroke-width="1.300"/></svg>
<div class="t" style="left:1771px;top:827px;font-size:13px;color:#606266">前往</div>
<div class="pg" style="left:1802px;width:46px;border:1px solid #dcdfe6;border-radius:3px;background:#fff"></div>
<div class="t" style="left:1802px;top:827px;width:46px;text-align:center;font-size:13px;color:#606266">1</div>
<div class="t" style="left:1852px;top:827px;font-size:13px;color:#606266">页</div>

<!-- robot mascot -->
<svg viewBox="0 0 56 120" style="left:1864px;top:400px;width:56px;height:120px">
<defs>
<radialGradient id="rg1" cx="40%" cy="35%" r="75%"><stop offset="0" stop-color="#ffffff"/><stop offset=".7" stop-color="#e9f7f0"/><stop offset="1" stop-color="#b8e6d0"/></radialGradient>
<linearGradient id="rg2" x1="0" y1="0" x2="1" y2="1"><stop offset="0" stop-color="#0a6b41"/><stop offset="1" stop-color="#04331f"/></linearGradient>
</defs>
<path d="M37.500 9.500L45.500 24" stroke="#0b6a40" stroke-width="4.200" stroke-linecap="butt" fill="none"/>
<ellipse cx="54" cy="26" rx="8" ry="7" fill="#0f7a4a"/>
<ellipse cx="12.500" cy="56" rx="3.500" ry="8" transform="rotate(-18 12.500 56)" fill="#0b6a40"/>
<ellipse cx="32" cy="41" rx="24" ry="22" transform="rotate(-18 32 41)" fill="url(#rg1)"/>
<ellipse cx="16" cy="26" rx="3" ry="4.500" transform="rotate(35 16 26)" fill="#cdeedd"/>
<path d="M13 56c-3-10 10-20 28-25 5-1.400 9 1 10 5 2 9-4 20-16 24-10 3.400-19 3-22-4z" fill="url(#rg2)"/>
<ellipse cx="22.500" cy="52" rx="4.200" ry="4.800" fill="#10e07a"/>
<ellipse cx="36.500" cy="44.500" rx="4.200" ry="4.800" fill="#10e07a"/>
<path d="M44 64c4-1 7-3 9-6l2 4c-3 3-6 4-10 4z" fill="#0b6a40"/>
<path d="M6 63c2-3 6-2 8 1 4 6 9 11 15 14.500 2 1 2 4 0 5-3 1-7 0-11-2-6-4-10-9.500-12-14.500-1-1.500-1-3 0-4z" fill="url(#rg1)" stroke="#cfeede" stroke-width=".6"/>
<circle cx="56" cy="81" r="25" fill="url(#rg1)"/>
<circle cx="54" cy="77" r="7" fill="#1d9a63"/>
<path d="M58 77a4 4 0 1 1-2-3.500" fill="none" stroke="#fff" stroke-width="1.600"/>
</svg>

</body>
</html>
